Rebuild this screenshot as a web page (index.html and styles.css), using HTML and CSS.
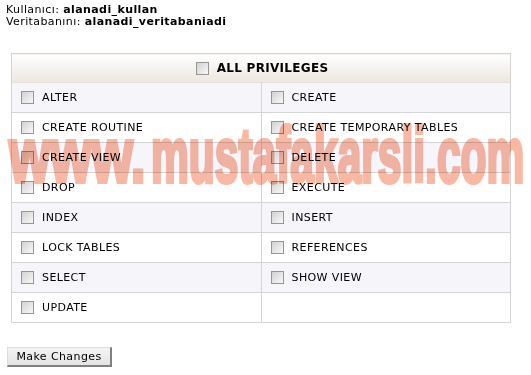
FILE: index.html
```html
<!DOCTYPE html>
<html lang="tr">
<head>
    <meta charset="UTF-8">
    <title>Veritabanı Yetkileri</title>
    <link rel="stylesheet" href="styles.css">
</head>
<body>
    <div class="info">
        <div>Kullanıcı: <b>alanadi_kullan</b></div>
        <div>Veritabanını: <b>alanadi_veritabaniadi</b></div>
    </div>
    <div class="wrap">
        <table class="privs">
            <tr class="head">
                <th colspan="2"><label><input type="checkbox"> ALL PRIVILEGES</label></th>
            </tr>
            <tr class="odd">
                <td><label><input type="checkbox"> ALTER</label></td>
                <td><label><input type="checkbox"> CREATE</label></td>
            </tr>
            <tr>
                <td><label><input type="checkbox"> CREATE ROUTINE</label></td>
                <td><label><input type="checkbox"> CREATE TEMPORARY TABLES</label></td>
            </tr>
            <tr class="odd">
                <td><label><input type="checkbox"> CREATE VIEW</label></td>
                <td><label><input type="checkbox"> DELETE</label></td>
            </tr>
            <tr>
                <td><label><input type="checkbox"> DROP</label></td>
                <td><label><input type="checkbox"> EXECUTE</label></td>
            </tr>
            <tr class="odd">
                <td><label><input type="checkbox"> INDEX</label></td>
                <td><label><input type="checkbox"> INSERT</label></td>
            </tr>
            <tr>
                <td><label><input type="checkbox"> LOCK TABLES</label></td>
                <td><label><input type="checkbox"> REFERENCES</label></td>
            </tr>
            <tr class="odd">
                <td><label><input type="checkbox"> SELECT</label></td>
                <td><label><input type="checkbox"> SHOW VIEW</label></td>
            </tr>
            <tr>
                <td><label><input type="checkbox"> UPDATE</label></td>
                <td></td>
            </tr>
        </table>
        <div class="watermark"><span class="wm-a">www.</span><span class="wm-b">mustafakarsli.com</span></div>
    </div>
    <button class="btn">Make Changes</button>
</body>
</html>
```

FILE: styles.css
```css
body {
    font-family: "DejaVu Sans", Verdana, sans-serif;
    font-size: 11px;
    letter-spacing: 0.4px;
    color: #000;
    background: #fff;
    margin: 4px 6px;
}
.info {
    line-height: 12px;
}
.wrap {
    position: relative;
    width: 500px;
    margin: 25px 0 0 5px;
}
.privs {
    width: 500px;
    border-collapse: collapse;
    border: 1px solid #cfcfcf;
}
.privs td, .privs th {
    border: 1px solid #d4d4d4;
    height: 29px;
    padding: 0 0 0 9px;
    text-align: left;
    width: 50%;
}
.privs .head th {
    text-align: center;
    font-size: 12px;
    letter-spacing: 0.3px;
    font-weight: bold;
    height: 28px;
    padding: 0 0 0 2px;
    background: linear-gradient(#ffffff, #ece6df);
    border-bottom-color: #e4e0dc;
}
.privs tr.odd td {
    background: #f5f5fa;
}
label {
    display: flex;
    align-items: center;
    gap: 8px;
}
.head label {
    justify-content: center;
}
input[type=checkbox] {
    appearance: none;
    margin: 0;
    width: 13px;
    height: 13px;
    border: 1px solid #969696;
    background: linear-gradient(135deg, #d2d2d2, #f8f8f8);
}
.watermark {
    position: absolute;
    left: -2px;
    top: 52px;
    height: 100px;
    font-family: "Liberation Sans", Arial, sans-serif;
    font-weight: bold;
    font-size: 78px;
    letter-spacing: 0;
    line-height: 100px;
    color: #f9b8a4;
    -webkit-text-stroke: 4px #f9b8a4;
    mix-blend-mode: multiply;
    white-space: nowrap;
    pointer-events: none;
    display: flex;
}
.wm-a, .wm-b {
    display: inline-block;
    transform-origin: left top;
}
.wm-a {
    width: 142px;
    transform: scaleX(0.68);
}
.wm-b {
    transform: scaleX(0.545);
}
.btn {
    margin: 24px 0 0 1px;
    font-family: "DejaVu Sans", Verdana, sans-serif;
    font-size: 11px;
    letter-spacing: 0.4px;
    width: 105px;
    height: 20px;
    padding: 0;
    color: #000;
    background: linear-gradient(#f4f4f4, #e4e4e4);
    border: 1px solid #dcdcdc;
    border-right: 2px solid #808080;
    border-bottom: 2px solid #808080;
}
```
